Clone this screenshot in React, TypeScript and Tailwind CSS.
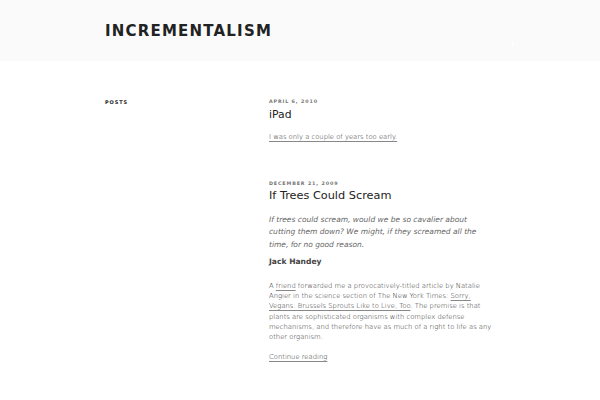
import React from "react";

const font = { fontFamily: '"DejaVu Sans", sans-serif' };

function Link({ children }: { children: React.ReactNode }) {
  return (
    <a className="underline decoration-[#888] decoration-[0.5px] underline-offset-[1.5px]" href="#">
      {children}
    </a>
  );
}

export default function App() {
  return (
    <div className="w-[600px] h-[400px] bg-white overflow-hidden" style={font}>
      <header className="h-[61px] bg-[#fafafa] relative">
        <div className="pl-[105px] pt-[22px]">
          <h1 className="text-[15px] leading-[18.75px] font-bold tracking-[0.08em] text-[#222] uppercase">
            Incrementalism
          </h1>
        </div>
        <svg className="absolute left-[509px] top-[42px]" width="7" height="6" viewBox="0 0 7 6">
          <path d="M3.5 0v4.5M1.5 2.8l2 2 2-2" stroke="#ffffff" strokeWidth="0.8" fill="none" />
        </svg>
      </header>
      <main className="flex pl-[105px] pt-[37px]">
        <div className="w-[164px]">
          <h2 className="text-[5px] leading-[8px] font-bold tracking-[0.18em] uppercase text-[#222]">Posts</h2>
        </div>
        <div className="w-[226px] text-[#222]">
          <article>
            <div className="text-[4.8px] leading-[8px] font-extrabold tracking-[0.18em] uppercase text-[#767676]">
              April 6, 2010
            </div>
            <h3 className="mt-[1.5px] text-[10.8px] leading-[14px] text-[#222]">iPad</h3>
            <p className="mt-[10px] text-[6.8px] leading-[10.4px] font-light">
              <Link>I was only a couple of years too early.</Link>
            </p>
          </article>
          <article className="mt-[38px]">
            <div className="text-[4.8px] leading-[8px] font-extrabold tracking-[0.18em] uppercase text-[#767676]">
              December 21, 2009
            </div>
            <h3 className="mt-[1px] text-[11.3px] leading-[14px] text-[#222]">If Trees Could Scream</h3>
            <blockquote className="mt-[10.6px] text-[7.5px] leading-[12.75px] italic text-[#666]">
              If trees could scream, would we be so cavalier about cutting them down? We might, if they screamed all
              the time, for no good reason.
            </blockquote>
            <p className="mt-[4px] text-[7.6px] leading-[12px] font-bold text-[#444]">Jack Handey</p>
            <p className="mt-[13.3px] text-[6.8px] leading-[10.2px] font-light">
              A <Link>friend</Link> forwarded me a provocatively-titled article by Natalie Angier in the science section
              of The New York Times: <Link>Sorry, Vegans: Brussels Sprouts Like to Live, Too</Link>. The premise is that
              plants are sophisticated organisms with complex defense mechanisms, and therefore have as much of a right
              to life as any other organism.
            </p>
            <p className="mt-[10px] text-[6.8px] leading-[10.4px] font-light">
              <Link>Continue reading</Link>
            </p>
          </article>
        </div>
      </main>
    </div>
  );
}
